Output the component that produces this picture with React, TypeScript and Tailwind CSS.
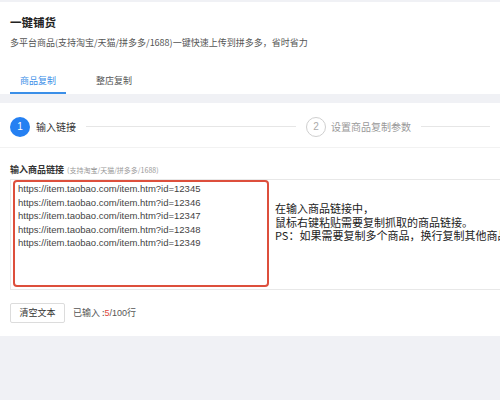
import React from "react";

const cjk = { fontFamily: '"Noto Sans CJK SC", "Noto Sans", sans-serif' };
const latin = { fontFamily: '"Liberation Sans", "Noto Sans CJK SC", sans-serif' };

const links = [12345, 12346, 12347, 12348, 12349].map(
  (id) => `https://item.taobao.com/item.htm?id=${id}`
);

function Steps() {
  return (
    <div className="flex items-center h-[45px] pb-[11px] pt-[14px] px-[10px] border-b border-[#f2f2f2]">
      <div className="w-[20px] h-[20px] rounded-full bg-[#2580f2] text-white text-[10px] flex items-center justify-center" style={latin}>
        1
      </div>
      <span className="ml-[6px] text-[10px] text-[#333]">输入链接</span>
      <div className="ml-[10px] w-[210px] h-px bg-[#e6e6e6]" />
      <div className="ml-[10px] w-[20px] h-[20px] rounded-full border border-[#cfcfcf] text-[#aaa] text-[10px] flex items-center justify-center shrink-0" style={latin}>
        2
      </div>
      <span className="ml-[5px] text-[10px] text-[#999] whitespace-nowrap">设置商品复制参数</span>
      <div className="ml-[10px] flex-1 h-px bg-[#e6e6e6]" />
    </div>
  );
}

export default function App() {
  return (
    <div className="w-[500px] h-[400px] bg-[#f0f1f5] pt-[2px] overflow-hidden" style={cjk}>
      <div className="bg-white px-[10px] pt-[12px]">
        <div className="text-[11.5px] leading-[16px] font-bold text-[#222]">一键铺货</div>
        <div className="mt-[7px] text-[9px] leading-[12px] text-[#555] whitespace-nowrap">
          多平台商品(支持淘宝/天猫/拼多多/1688)一键快速上传到拼多多，省时省力
        </div>
        <div className="mt-[20px] flex">
          <div className="w-[56px] h-[25px] flex items-center justify-center border-b-2 border-[#3b8fe8] text-[9px] text-[#3b8fe8]">
            商品复制
          </div>
          <div className="ml-[20px] h-[25px] px-[10px] flex items-center border-b-2 border-transparent text-[9px] text-[#555]">
            整店复制
          </div>
        </div>
      </div>

      <div className="mt-[9px] bg-white pb-[13px]">
        <Steps />
        <div className="px-[10px]">
          <div className="mt-[16px] flex items-baseline leading-[12px]">
            <span className="text-[9px] font-bold text-[#333]">输入商品链接</span>
            <span className="ml-[3px] text-[7px] text-[#999]">(支持淘宝/天猫/拼多多/1688)</span>
          </div>
          <div className="mt-[3px] h-[111px] w-[600px] border border-[#e8e8e8] flex pl-[2px]">
            <div className="w-[256px] h-[107px] border-2 border-[#dd4f3c] rounded-[4px] pl-[3px] text-[9.5px] leading-[13.5px] text-[#444] shrink-0" style={latin}>
              {links.map((l) => (
                <div key={l}>{l}</div>
              ))}
            </div>
            <div className="ml-[6px] pt-[22px] text-[11px] leading-[13.5px] text-[#222] whitespace-nowrap">
              <div>在输入商品链接中，</div>
              <div>鼠标右键粘贴需要复制抓取的商品链接。</div>
              <div>PS：如果需要复制多个商品，换行复制其他商品链接即可。</div>
            </div>
          </div>
          <div className="mt-[13px] flex items-center">
            <button className="w-[55px] h-[20px] border border-[#dcdcdc] rounded-[2px] bg-white text-[9px] text-[#333]">
              清空文本
            </button>
            <span className="ml-[8px] text-[9px] text-[#555]">
              已输入 :<span className="text-[#e0483a]" style={latin}>5</span>
              <span style={latin}>/100</span>行
            </span>
          </div>
        </div>
      </div>
    </div>
  );
}
